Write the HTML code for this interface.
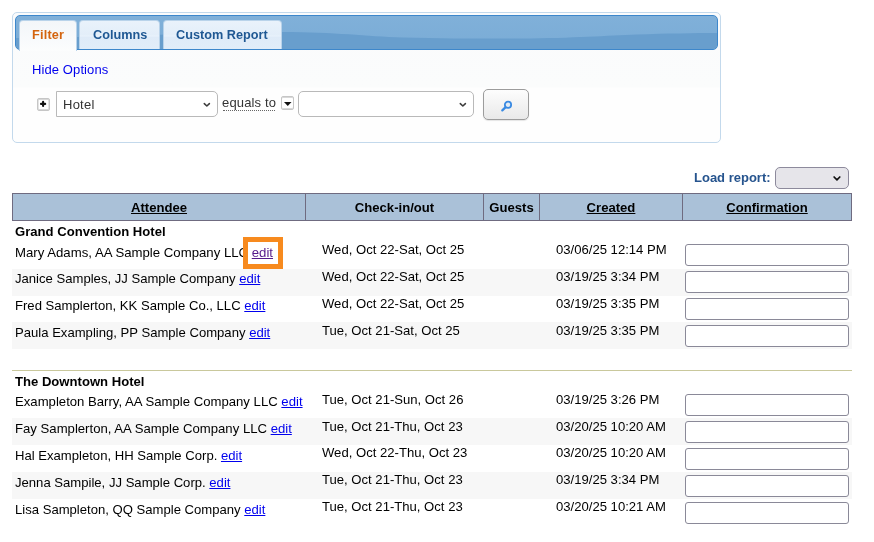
<!DOCTYPE html>
<html><head><meta charset="utf-8">
<style>
*{box-sizing:border-box;margin:0;padding:0}
html,body{width:874px;height:542px;overflow:hidden;background:#fff}
body{position:relative;will-change:transform;font-family:"Liberation Sans",sans-serif;font-size:13px;color:#000}
.a{position:absolute;white-space:nowrap}
/* filter panel */
#panel{left:12px;top:12px;width:709px;height:131px;border:1px solid #c3d9ec;border-radius:5px;background:linear-gradient(#fafbfc 0,#fbfcfc 74px,#fefefe 75px)}
#bar{left:15px;top:15px;width:703px;height:35px;border:1px solid #3d87cb;border-radius:5px;overflow:hidden;
 background:linear-gradient(#80b0d9,#7aacd6)}
#bar svg{position:absolute;left:0;top:0}
.tab{top:20px;height:30px;border-radius:4px 4px 0 0;border:1px solid #b9d3ea;border-bottom:none;
 background:linear-gradient(#e9f2fb 0,#e3eef9 14px,#eaf3fc 15px,#dfebf8 16px,#e1edf9 100%);
 font-weight:bold;font-size:12.7px;color:#1f5893;line-height:28px}
#t1{left:19px;width:58px;background:linear-gradient(#f3f6f9,#f8fafc 60%,#fcfdfd);color:#d4640f;height:31px}
#t2{left:79px;width:81px;height:29px}
#t3{left:163px;width:119px;height:29px}
.lnk{color:#0000ee}
.sel{border:1px solid #b9b9b9;border-radius:0 5px 5px 0;background:#fff;height:26px}
.chev{position:absolute;width:6px;height:6px;border-right:1.6px solid #555;border-bottom:1.6px solid #555;transform:rotate(45deg)}
/* table */
#thead{left:12px;top:193px;width:840px;height:28px;border:1px solid #6f6b80;background:#aac1d8}
.vl{position:absolute;top:193px;width:1px;height:28px;background:#6f6b80}
.th{top:194px;height:28px;line-height:27px;font-weight:bold;font-size:13.1px;text-align:center}
.th u{text-decoration:underline}
.gray{left:12px;width:840px;background:#f7f7f7}
.inp{left:685px;width:164px;height:22px;border:1.5px solid #8a8998;border-radius:3px;background:#fff}
.at{font-size:13.1px}
.at2{font-size:13.15px}
.dt{font-size:13.1px}
.edit{color:#0000ee;text-decoration:underline}
</style></head><body>
<div class="a" id="panel"></div>
<div class="a" id="bar"><svg width="701" height="33" viewBox="0 0 701 33"><path d="M0,22 C100,21 200,16 266,16 C320,16 350,20.5 386,21.4 C430,22.5 470,22.6 504,22.5 C560,22.2 590,19.5 621,18.5 C650,17.5 680,17 701,17 L701,40 L0,40 Z" fill="#689ecd"/></svg></div>
<div class="a tab" id="t1"><span class="a" style="left:12px;top:0px;letter-spacing:.2px">Filter</span></div>
<div class="a tab" id="t2"><span class="a" style="left:13px;top:0px">Columns</span></div>
<div class="a tab" id="t3"><span class="a" style="left:12px;top:0px">Custom Report</span></div>
<div class="a lnk" style="left:32px;top:62px;line-height:15px;letter-spacing:.1px">Hide Options</div>

<!-- plus box -->
<div class="a" style="left:37px;top:98px;width:13px;height:13px;border:1px solid #c6c6c6;border-radius:2px;background:#fff;box-shadow:inset 0 1px 0 #d8d8d8,inset 0 -1px 0 #d8d8d8,inset 1px 0 0 #e4e4e4,inset -1px 0 0 #e4e4e4"></div>
<svg class="a" style="left:38px;top:99px" width="11" height="11" viewBox="0 0 11 11"><path d="M3,4.9 H7.2 M5.1,2.8 V7.0" stroke="#111" stroke-width="2.1" stroke-linecap="round"/></svg>

<div class="a sel" style="left:56px;top:91px;width:162px"></div>
<div class="a" style="left:63px;top:97px;line-height:16px;color:#333;letter-spacing:.25px">Hotel</div>


<div class="a" style="left:222px;top:95px;line-height:15px;color:#333;letter-spacing:.15px">equals to</div>
<div class="a" style="left:223px;top:110px;width:52px;border-top:1px dotted #666"></div>
<div class="a" style="left:281px;top:96px;width:13px;height:14px;border:1px solid #c6c6c6;border-radius:2px;background:#fff;box-shadow:inset 0 1px 0 #d8d8d8,inset 0 -1px 0 #d8d8d8"></div>
<svg class="a" style="left:283px;top:101px" width="10" height="6" viewBox="0 0 10 6"><path d="M1,1 L8.5,1 L4.75,5 Z" fill="#111"/></svg>

<div class="a sel" style="left:298px;top:91px;width:176px;border-radius:5px"></div>


<div class="a" style="left:483px;top:89px;width:46px;height:31px;border:1px solid #9c9c9c;border-radius:5px;background:linear-gradient(#fdfdfd,#e9e9e9);box-shadow:0 1px 1px rgba(0,0,0,.1)"></div>
<svg class="a" style="left:499px;top:99px" width="14" height="14" viewBox="0 0 14 14"><circle cx="9" cy="5.8" r="3.15" fill="#e2ebf4" stroke="#3a8ae2" stroke-width="1.8"/><line x1="6.4" y1="8.4" x2="3.3" y2="11.4" stroke="#3a8ae2" stroke-width="2.3" stroke-linecap="round"/></svg>

<!-- load report -->
<div class="a" style="left:694px;top:170px;font-weight:bold;color:#26548e;line-height:15px">Load report:</div>
<div class="a" style="left:775px;top:167px;width:74px;height:22px;border:1px solid #8d8a9c;border-radius:5px;background:#e6e5ea"></div>


<svg class="a" style="left:0;top:0" width="874" height="190" viewBox="0 0 874 190">
<path d="M204.3,103.6 L206.85,106 L209.4,103.6" fill="none" stroke="#3c3c3c" stroke-width="1.55" stroke-linecap="round" stroke-linejoin="round"/>
<path d="M460.3,103.6 L462.85,106 L465.4,103.6" fill="none" stroke="#3c3c3c" stroke-width="1.55" stroke-linecap="round" stroke-linejoin="round"/>
<path d="M834.1,177 L836.95,179.8 L839.8,177" fill="none" stroke="#111" stroke-width="1.7" stroke-linecap="round" stroke-linejoin="round"/>
</svg>
<!-- table header -->
<div class="a" id="thead"></div>
<div class="vl" style="left:305px"></div>
<div class="vl" style="left:483px"></div>
<div class="vl" style="left:539px"></div>
<div class="vl" style="left:682px"></div>
<div class="a th" style="left:13px;width:292px"><u>Attendee</u></div>
<div class="a th" style="left:306px;width:177px">Check-in/out</div>
<div class="a th" style="left:484px;width:55px">Guests</div>
<div class="a th" style="left:540px;width:142px"><u>Created</u></div>
<div class="a th" style="left:683px;width:168px"><u>Confirmation</u></div>

<!-- group 1 -->
<div class="a" style="left:15px;top:224px;font-weight:bold;font-size:13.1px;line-height:15px">Grand Convention Hotel</div>

<div class="a gray" style="top:269px;height:27px"></div>
<div class="a gray" style="top:322px;height:27px"></div>

<div class="a at" style="left:15px;top:245px;font-size:13.2px;line-height:15px">Mary Adams, AA Sample Company LLC <span class="edit" style="color:#551a8b">edit</span></div>
<div class="a dt" style="left:322px;top:242px;line-height:15px">Wed, Oct 22-Sat, Oct 25</div>
<div class="a dt" style="left:556px;top:242px;line-height:15px">03/06/25 12:14 PM</div>
<div class="a inp" style="top:244px"></div>

<div class="a at" style="left:15px;top:271px;line-height:15px">Janice Samples, JJ Sample Company <span class="edit">edit</span></div>
<div class="a dt" style="left:322px;top:269px;line-height:15px">Wed, Oct 22-Sat, Oct 25</div>
<div class="a dt" style="left:556px;top:269px;line-height:15px">03/19/25 3:34 PM</div>
<div class="a inp" style="top:271px"></div>

<div class="a at" style="left:15px;top:298px;line-height:15px">Fred Samplerton, KK Sample Co., LLC <span class="edit">edit</span></div>
<div class="a dt" style="left:322px;top:296px;line-height:15px">Wed, Oct 22-Sat, Oct 25</div>
<div class="a dt" style="left:556px;top:296px;line-height:15px">03/19/25 3:35 PM</div>
<div class="a inp" style="top:298px"></div>

<div class="a at" style="left:15px;top:325px;line-height:15px">Paula Exampling, PP Sample Company <span class="edit">edit</span></div>
<div class="a dt" style="left:322px;top:323px;line-height:15px">Tue, Oct 21-Sat, Oct 25</div>
<div class="a dt" style="left:556px;top:323px;line-height:15px">03/19/25 3:35 PM</div>
<div class="a inp" style="top:325px"></div>

<div class="a" style="left:12px;top:370px;width:840px;height:1px;background:#c9c89c"></div>

<!-- group 2 -->
<div class="a" style="left:15px;top:374px;font-weight:bold;font-size:13.1px;line-height:15px">The Downtown Hotel</div>

<div class="a gray" style="top:418px;height:27px"></div>
<div class="a gray" style="top:472px;height:27px"></div>

<div class="a at at2" style="left:15px;top:394px;line-height:15px">Exampleton Barry, AA Sample Company LLC <span class="edit">edit</span></div>
<div class="a dt" style="left:322px;top:392px;line-height:15px">Tue, Oct 21-Sun, Oct 26</div>
<div class="a dt" style="left:556px;top:392px;line-height:15px">03/19/25 3:26 PM</div>
<div class="a inp" style="top:394px"></div>

<div class="a at at2" style="left:15px;top:421px;line-height:15px">Fay Samplerton, AA Sample Company LLC <span class="edit">edit</span></div>
<div class="a dt" style="left:322px;top:419px;line-height:15px">Tue, Oct 21-Thu, Oct 23</div>
<div class="a dt" style="left:556px;top:419px;line-height:15px">03/20/25 10:20 AM</div>
<div class="a inp" style="top:421px"></div>

<div class="a at" style="left:15px;top:448px;line-height:15px">Hal Exampleton, HH Sample Corp. <span class="edit">edit</span></div>
<div class="a dt" style="left:322px;top:445px;line-height:15px">Wed, Oct 22-Thu, Oct 23</div>
<div class="a dt" style="left:556px;top:445px;line-height:15px">03/20/25 10:20 AM</div>
<div class="a inp" style="top:448px"></div>

<div class="a at" style="left:15px;top:475px;line-height:15px">Jenna Sampile, JJ Sample Corp. <span class="edit">edit</span></div>
<div class="a dt" style="left:322px;top:472px;line-height:15px">Tue, Oct 21-Thu, Oct 23</div>
<div class="a dt" style="left:556px;top:472px;line-height:15px">03/19/25 3:34 PM</div>
<div class="a inp" style="top:475px"></div>

<div class="a at" style="left:15px;top:502px;line-height:15px">Lisa Sampleton, QQ Sample Company <span class="edit">edit</span></div>
<div class="a dt" style="left:322px;top:499px;line-height:15px">Tue, Oct 21-Thu, Oct 23</div>
<div class="a dt" style="left:556px;top:499px;line-height:15px">03/20/25 10:21 AM</div>
<div class="a inp" style="top:502px"></div>

<!-- highlight -->
<div class="a" style="left:243px;top:237px;width:40px;height:32px;border:5px solid #f78a1e"></div>
</body></html>
